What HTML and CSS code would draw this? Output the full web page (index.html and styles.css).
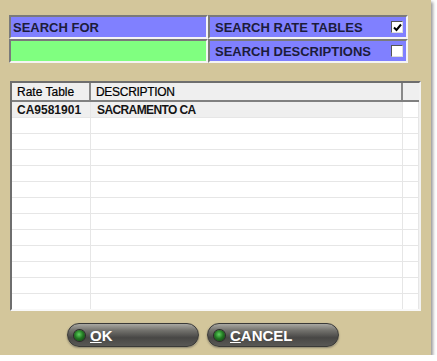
FILE: index.html
```html
<!DOCTYPE html>
<html lang="en">
<head>
  <meta charset="UTF-8">
  <title>Rate Table Search</title>
  <link rel="stylesheet" href="styles.css">
</head>
<body>
  <div class="window">
    <div class="search-panel">
      <div class="cell blue">SEARCH FOR</div>
      <div class="cell blue option">
        <span>SEARCH RATE TABLES</span>
        <span class="check checked">
          <svg width="9" height="9" viewBox="0 0 9 9"><path d="M1 4.5 L3.5 7 L8 1.5" fill="none" stroke="#000" stroke-width="2"/></svg>
        </span>
      </div>
      <div class="cell green"></div>
      <div class="cell blue option">
        <span>SEARCH DESCRIPTIONS</span>
        <span class="check"></span>
      </div>
    </div>

    <div class="grid">
      <div class="grid-head">
        <div class="c1">Rate Table</div>
        <div class="c2">DESCRIPTION</div>
        <div class="c3"></div>
      </div>
      <div class="grid-body" id="gridBody">
        <div class="row selected">
          <div class="c1">CA9581901</div>
          <div class="c2">SACRAMENTO CA</div>
          <div class="c3"></div>
        </div>
      </div>
    </div>

    <div class="button-container">
      <button class="pill"><span class="led"></span><span><u>O</u>K</span></button>
      <button class="pill"><span class="led"></span><span><u>C</u>ANCEL</span></button>
    </div>
  </div>

  <script>
    const gridBody = document.getElementById('gridBody');
    for (let i = 0; i < 12; i++) {
      const row = document.createElement('div');
      row.className = 'row';
      row.innerHTML = '<div class="c1"></div><div class="c2"></div><div class="c3"></div>';
      gridBody.appendChild(row);
    }
  </script>
</body>
</html>
```

FILE: styles.css
```css
body {
  margin: 0;
  background: #fff;
  font-family: 'Liberation Sans', Arial, sans-serif;
}

.window {
  width: 431px;
  height: 355px;
  box-sizing: border-box;
  padding: 15px 0 0 9px;
  background: #d3c69b;
  box-shadow: 2px 2px 3px #9a9a9a;
}

.search-panel {
  display: grid;
  grid-template-columns: 199px 200px;
  grid-template-rows: 24px 24px;
  width: 399px;
}

.cell {
  box-sizing: border-box;
  border: 2px solid;
  border-color: #7a7a7a #f4f4f4 #f4f4f4 #7a7a7a;
  font-size: 13px;
  font-weight: bold;
  color: #1c1c3a;
  padding: 0 0 0 2px;
  display: flex;
  align-items: center;
}

.blue {
  background: #8080ff;
}

.green {
  background: #80ff80;
}

.option {
  justify-content: space-between;
  padding: 0 3px 0 5px;
}

.check {
  width: 12px;
  height: 12px;
  box-sizing: border-box;
  background: #fff;
  border: 1px solid;
  border-color: #555 #ddd #ddd #555;
  display: flex;
  align-items: center;
  justify-content: center;
}

.grid {
  margin-top: 18px;
  width: 411px;
  height: 230px;
  box-sizing: border-box;
  margin-left: 1px;
  border: 2px solid;
  border-color: #6e6e6e #f2f2f2 #f8f8f8 #6e6e6e;
  background: #fff;
  overflow: hidden;
  font-size: 12px;
}

.grid-head, .row {
  display: grid;
  grid-template-columns: 79px 312px 16px;
}

.grid-head {
  height: 19px;
  background: #efefef;
  border-bottom: 2px solid #808080;
  box-sizing: border-box;
  color: #000;
  -webkit-text-stroke: 0.2px #000;
}

.grid-head > div {
  border-right: 2px solid #888;
  padding: 2px 0 0 5px;
}

.grid-head .c2 {
  letter-spacing: -0.3px;
}

.grid-head .c3 {
  border-right: none;
}

.row {
  height: 16px;
  box-sizing: border-box;
  border-bottom: 1px solid #e6e6e6;
  font-weight: bold;
  color: #141414;
}

.row > div {
  border-right: 1px solid #e6e6e6;
  padding: 1px 0 0 5px;
}

.row.selected .c1, .row.selected .c2 {
  background: #efefef;
}

.row .c2 {
  padding-left: 6px;
  letter-spacing: -0.6px;
}

.button-container {
  display: flex;
  gap: 8px;
  margin: 12px 0 0 58px;
}

.pill {
  width: 132px;
  height: 24px;
  border: 1px solid #3a3a38;
  border-radius: 12px;
  background: linear-gradient(to bottom, #a9a8a2 0%, #74736e 28%, #484745 62%, #595855 100%);
  box-shadow: 0 1px 2px #8a8470;
  display: flex;
  align-items: center;
  gap: 5px;
  padding: 0 0 0 6px;
  color: #fff;
  font-family: 'Liberation Sans', Arial, sans-serif;
  font-size: 15px;
  font-weight: bold;
  cursor: pointer;
}

.led {
  width: 11px;
  height: 11px;
  border-radius: 50%;
  background: radial-gradient(circle at 45% 40%, #5fd15f 0%, #237a23 45%, #0f3310 100%);
  box-shadow: 0 0 0 1px #2a2a28;
}
```
